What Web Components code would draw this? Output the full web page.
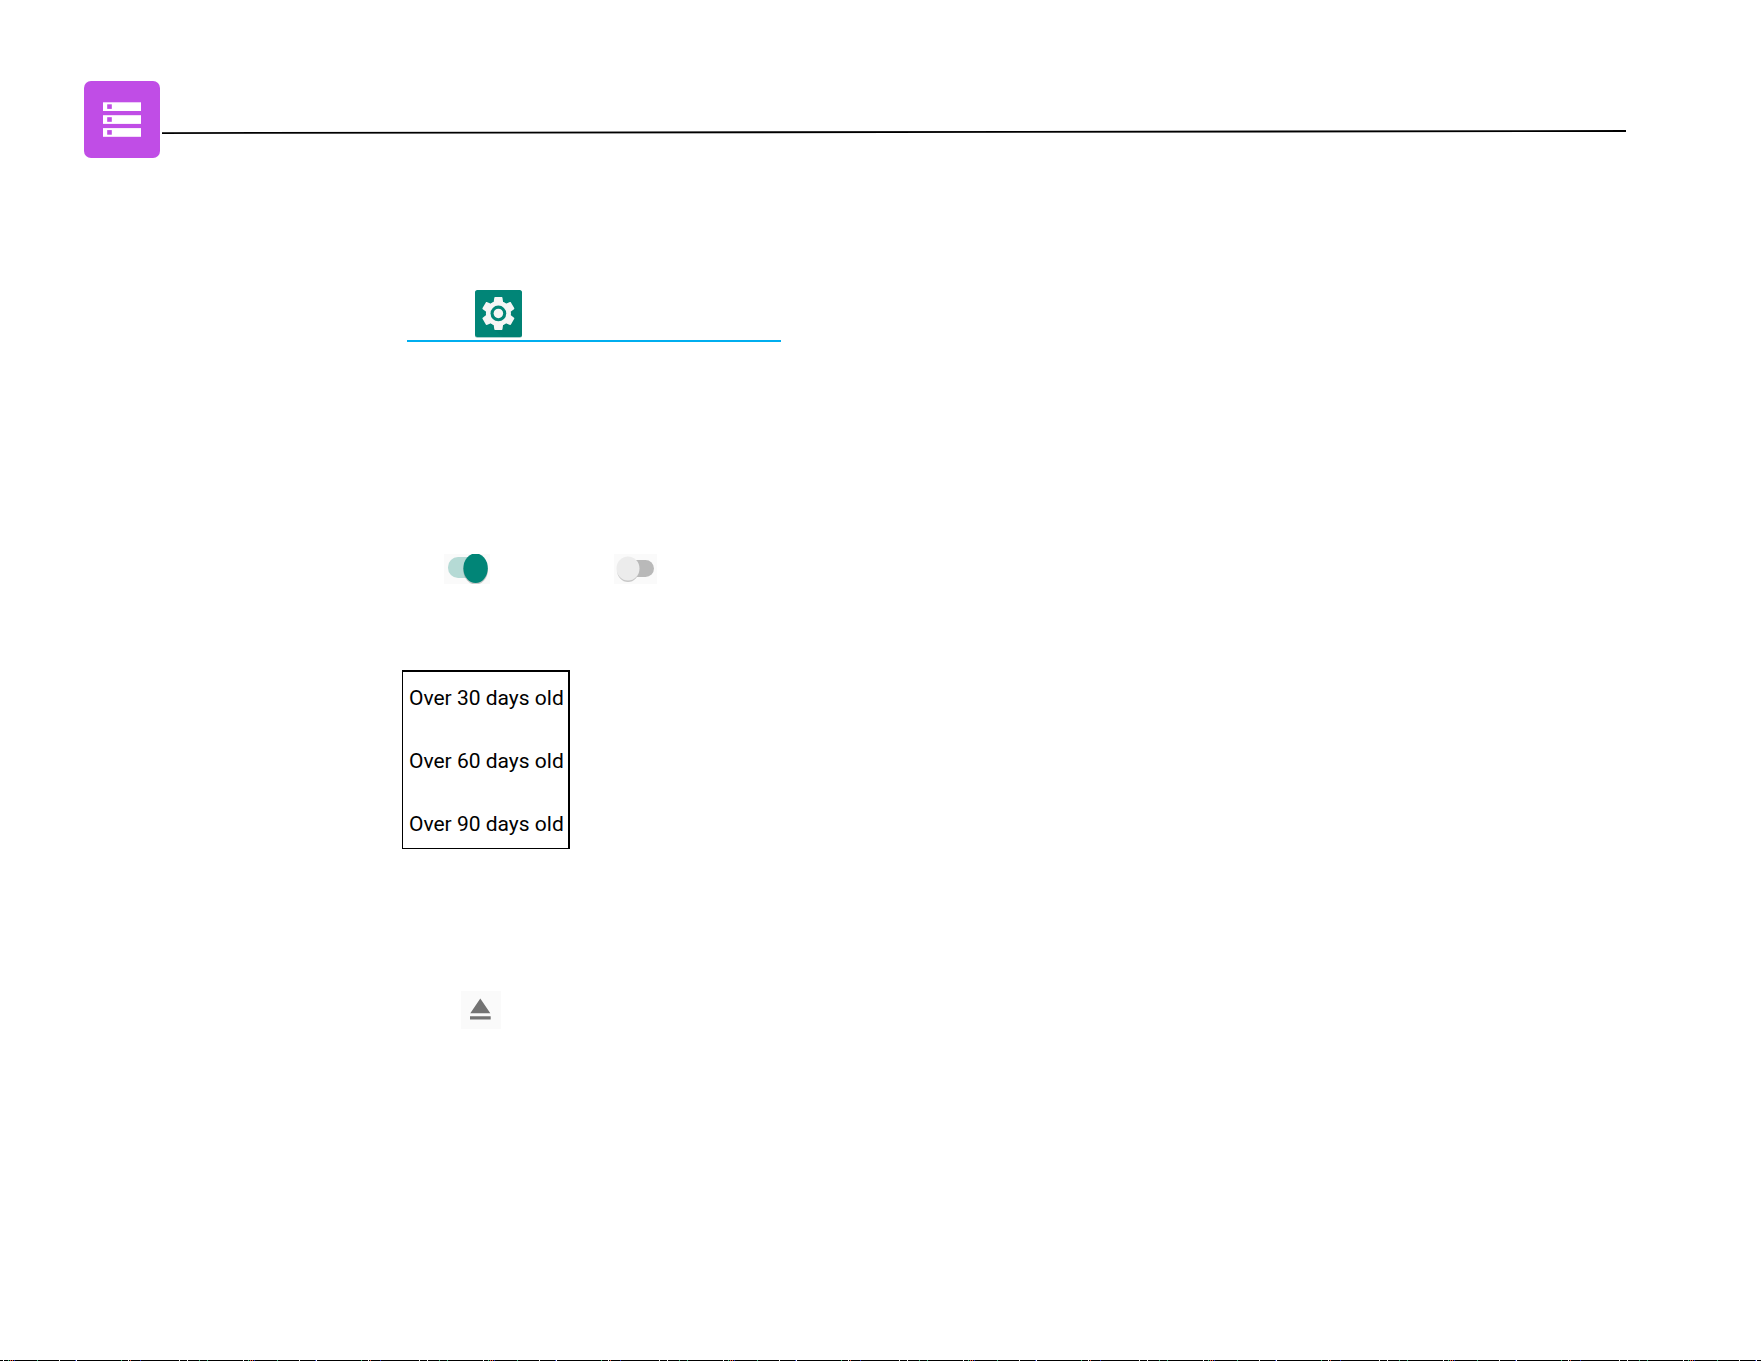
<!DOCTYPE html>
<html lang="en">
<head>
<meta charset="utf-8">
<meta name="viewport" content="width=device-width, initial-scale=1">
<title>Storage</title>
<style>
  body {
    margin: 0;
    background: #fff;
    color: #000;
    font-family: Roboto, "Liberation Sans", sans-serif;
  }
</style>
</head>
<body>
<storage-page>
  <page-header slot="header"></page-header>
  <settings-link></settings-link>
  <div class="switches">
    <toggle-switch label="Storage manager on" checked></toggle-switch>
    <toggle-switch label="Storage manager off"></toggle-switch>
  </div>
  <age-list>
    <li>Over 30 days old</li>
    <li>Over 60 days old</li>
    <li>Over 90 days old</li>
  </age-list>
  <eject-button></eject-button>
  <page-edge slot="footer"></page-edge>
</storage-page>

<script>
/**
 * Page frame: header, a column of storage controls, bottom edge
 */
class StoragePage extends HTMLElement {
  constructor() {
    super();
    this.attachShadow({ mode: "open" });
  }

  connectedCallback() {
    this.shadowRoot.innerHTML = `
      <style>
        :host {
          display: flex;
          flex-direction: column;
          min-height: 100vh;
        }

        main {
          display: flex;
          flex-direction: column;
          align-items: flex-start;
          padding: 132px 24px 48px 402px;
        }

        footer {
          margin-top: auto;
        }

        ::slotted(.switches) {
          display: flex;
          gap: 124px;
          margin: 212px 0 86px 42px;
        }

        ::slotted(eject-button) {
          margin: 142px 0 0 59px;
        }
      </style>
      <slot name="header"></slot>
      <main><slot></slot></main>
      <footer><slot name="footer"></slot></footer>
    `;
  }
}

/**
 * Storage logo with the title rule running to the right
 */
class PageHeader extends HTMLElement {
  constructor() {
    super();
    this.attachShadow({ mode: "open" });
  }

  connectedCallback() {
    this.shadowRoot.innerHTML = `
      <style>
        :host {
          display: block;
        }

        header {
          display: flex;
          align-items: center;
          gap: 2px;
          padding: 81px 135px 0 84px;
        }

        svg {
          display: block;
          flex: none;
        }

        .rule {
          flex: 1;
          min-width: 0;
          height: 4px;
          margin-top: 24px;
        }
      </style>
      <header>
        <svg width="76" height="77" viewBox="0 0 76 77" role="img" aria-label="Storage">
          <rect width="76" height="77" rx="7" fill="#c04de6"/>
          <g fill="#fff">
            <rect x="19" y="21.3" width="38" height="8.7"/>
            <rect x="19" y="34.2" width="38" height="8.7"/>
            <rect x="19" y="47.1" width="38" height="8.7"/>
          </g>
          <g fill="#c04de6">
            <rect x="23.2" y="23.3" width="4.6" height="4.6"/>
            <rect x="23.2" y="36.2" width="4.6" height="4.6"/>
            <rect x="23.2" y="49.1" width="4.6" height="4.6"/>
          </g>
        </svg>
        <svg class="rule" viewBox="0 0 1464 4" preserveAspectRatio="none" aria-hidden="true">
          <path d="M0 2.2 1464 0V1.9L0 4Z" fill="#000"/>
        </svg>
      </header>
    `;
  }
}

class SettingsLink extends HTMLElement {
  constructor() {
    super();
    this.attachShadow({ mode: "open" });
  }

  connectedCallback() {
    this.shadowRoot.innerHTML = `
      <style>
        :host {
          display: block;
          box-sizing: border-box;
          width: 374px;
          max-width: 100%;
          margin-left: 5px;
        }

        a {
          display: block;
          padding: 0 0 2px 68px;
          border-bottom: 2px solid #00aeef;
        }

        svg {
          display: block;
        }
      </style>
      <a href="#settings" aria-label="Settings">
        <svg width="48" height="48" viewBox="0 0 48 48" aria-hidden="true">
          <rect x="0" y=".4" width="47" height="47.4" rx="2.5" fill="#00796b" opacity=".45"/>
          <rect x="0" y="0" width="47" height="47" rx="2.5" fill="#018577"/>
          <path d="M36 13 47 24V44.5Q47 47 44.5 47H28L17 38Z" fill="#007c6f" opacity=".45"/>
          <g transform="translate(3.7 3.8) scale(1.64)" fill="#f5f5f5">
            <path d="M19.43 12.98c.04-.32.07-.64.07-.98s-.03-.66-.07-.98l2.11-1.65c.19-.15.24-.42.12-.64l-2-3.46c-.12-.22-.39-.3-.61-.22l-2.49 1c-.52-.4-1.08-.73-1.69-.98l-.38-2.65C14.46 2.18 14.25 2 14 2h-4c-.25 0-.46.18-.49.42l-.38 2.65c-.61.25-1.17.59-1.69.98l-2.49-1c-.23-.09-.49 0-.61.22l-2 3.46c-.13.22-.07.49.12.64l2.11 1.65c-.04.32-.07.65-.07.98s.03.66.07.98l-2.11 1.65c-.19.15-.24.42-.12.64l2 3.46c.12.22.39.3.61.22l2.49-1c.52.4 1.08.73 1.69.98l.38 2.65c.03.24.24.42.49.42h4c.25 0 .46-.18.49-.42l.38-2.65c.61-.25 1.17-.59 1.69-.98l2.49 1c.23.09.49 0 .61-.22l2-3.46c.12-.22.07-.49-.12-.64l-2.11-1.65z"/>
            <circle cx="12" cy="12" r="7.6"/>
            <circle cx="12" cy="12" r="4.8" fill="#018577"/>
            <circle cx="12" cy="12" r="2.9"/>
          </g>
        </svg>
      </a>
    `;
  }
}

/**
 * Switch drawn over a real checkbox
 */
class ToggleSwitch extends HTMLElement {
  constructor() {
    super();
    this.attachShadow({ mode: "open" });
  }

  connectedCallback() {
    this.shadowRoot.innerHTML = `
      <style>
        :host {
          display: block;
        }

        label {
          display: grid;
          cursor: pointer;
        }

        input,
        svg {
          grid-area: 1 / 1;
          width: 46px;
          height: 30px;
          margin: 0;
        }

        input {
          opacity: 0;
          cursor: inherit;
        }

        svg {
          display: block;
          pointer-events: none;
        }

        .on,
        input:checked ~ .off {
          display: none;
        }

        input:checked ~ .on {
          display: block;
        }
      </style>
      <label>
        <input type="checkbox" role="switch">
        <svg class="on" viewBox="0 0 46 30" aria-hidden="true">
          <rect width="46" height="30" fill="#fafafa"/>
          <rect x="4" y="3" width="36" height="21" rx="10" fill="#b5dad5"/>
          <ellipse cx="31.6" cy="16" rx="12.3" ry="14.5" fill="#555" opacity=".3"/>
          <ellipse cx="31.6" cy="14.2" rx="12.2" ry="14.8" fill="#018577"/>
        </svg>
        <svg class="off" viewBox="0 0 46 30" aria-hidden="true">
          <rect width="43" height="30" fill="#fafafa"/>
          <rect x="10" y="6" width="30" height="17" rx="8.5" fill="#b9b9b9"/>
          <ellipse cx="14" cy="16" rx="11" ry="12" fill="#c8c8c8"/>
          <ellipse cx="14" cy="14.5" rx="11.5" ry="12" fill="#ececec"/>
        </svg>
      </label>
    `;

    const input = this.shadowRoot.querySelector("input");
    input.checked = this.hasAttribute("checked");
    input.setAttribute("aria-label", this.getAttribute("label") || "");
    input.addEventListener("change", () => {
      this.toggleAttribute("checked", input.checked);
    });
  }
}

class AgeList extends HTMLElement {
  constructor() {
    super();
    this.attachShadow({ mode: "open" });
  }

  connectedCallback() {
    this.shadowRoot.innerHTML = `
      <style>
        :host {
          display: block;
        }

        ul {
          display: flex;
          flex-direction: column;
          gap: 39px;
          margin: 0;
          padding: 14px 4px 12px 6px;
          border: solid #000;
          border-width: 2px 2px 1px 1px;
          list-style: none;
          font-size: 21px;
          line-height: 24px;
          white-space: nowrap;
        }
      </style>
      <ul><slot></slot></ul>
    `;
  }
}

class EjectButton extends HTMLElement {
  constructor() {
    super();
    this.attachShadow({ mode: "open" });
  }

  connectedCallback() {
    this.shadowRoot.innerHTML = `
      <style>
        :host {
          display: block;
        }

        button {
          display: block;
          padding: 0;
          border: none;
          background: #fafafa;
          cursor: pointer;
        }

        svg {
          display: block;
        }
      </style>
      <button type="button" aria-label="Eject">
        <svg width="40" height="38" viewBox="0 0 40 38" aria-hidden="true">
          <path d="M19.3 7.5 29.3 22.3H9.3ZM9 25.3H29.7V28.5H9Z" fill="#737373"/>
        </svg>
      </button>
    `;
  }
}

/**
 * One pixel bottom edge: black with small light and coloured breaks
 */
class PageEdge extends HTMLElement {
  constructor() {
    super();
    this.attachShadow({ mode: "open" });
  }

  connectedCallback() {
    this.shadowRoot.innerHTML = `
      <style>
        :host {
          display: block;
          height: 1px;
        }

        svg {
          display: block;
          width: 100%;
          height: 1px;
        }
      </style>
      <svg aria-hidden="true">
        <defs>
          <pattern id="edge" width="240" height="1" patternUnits="userSpaceOnUse">
            <rect width="240" height="1" fill="#000"/>
            <path d="M59 0h1v1h-1zM76 0h1v1h-1zM179 0h1v1h-1zM187 0h1v1h-1zM3 0h1v1h-1zM128 0h1v1h-1z" fill="#fff"/>
            <path d="M8 0h1v1H8zM37 0h1v1h-1zM121 0h1v1h-1zM199 0h1v1h-1zM207 0h1v1h-1z" fill="#4c8"/>
            <path d="M12 0h1v1h-1zM130 0h1v1h-1zM10 0h1v1h-1z" fill="#e53"/>
            <path d="M14 0h1v1h-1zM75 0h1v1h-1zM140 0h1v1h-1z" fill="#23c"/>
          </pattern>
        </defs>
        <rect width="100%" height="1" fill="url(#edge)"/>
      </svg>
    `;
  }
}

customElements.define("storage-page", StoragePage);
customElements.define("page-header", PageHeader);
customElements.define("settings-link", SettingsLink);
customElements.define("toggle-switch", ToggleSwitch);
customElements.define("age-list", AgeList);
customElements.define("eject-button", EjectButton);
customElements.define("page-edge", PageEdge);
</script>
</body>
</html>
